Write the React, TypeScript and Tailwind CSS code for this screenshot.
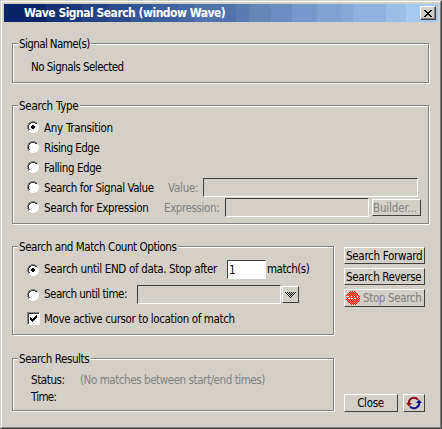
import React from "react";

const raised = "border border-t-white border-l-white border-r-[#404040] border-b-[#404040] bg-[#d4d0c8]";
const sunken = "border border-t-[#404040] border-l-[#404040] border-r-white border-b-white";

function Group({ title, legend, className, children }: { title: string; legend: string; className: string; children: React.ReactNode }) {
  return (
    <section className={`border border-[#808080] shadow-[1px_1px_0_white,inset_1px_1px_0_white] ${className}`}>
      <div className={`ml-[5px] -mt-[8px] h-[16px] bg-[#d4d0c8] pl-[1px] leading-[16px] ${legend}`}>{title}</div>
      {children}
    </section>
  );
}

function Radio({ checked = false }: { checked?: boolean }) {
  return (
    <svg className="mr-[5px] h-[12px] w-[12px] shrink-0" viewBox="0 0 12 12" shapeRendering="crispEdges">
      <path fill="#fff" d="M4 1h4v1h2v2h1v4h-1v2H8v1H4v-1H2V8H1V4h1V2h2z" />
      <path fill="#808080" d="M4 0h4v1H4zM2 1h2v1H2zM8 1h2v1H8zM1 2h1v2H1zM0 4h1v4H0zM1 8h1v2H1z" />
      <path fill="#404040" d="M4 1h4v1H4zM2 2h2v1H2zM8 2h2v1H8zM2 3h1v1H2zM1 4h1v4H1zM2 8h1v1H2z" />
      <path fill="#fff" d="M11 4h1v4h-1zM10 8h1v2h-1zM8 10h2v1H8zM4 11h4v1H4zM2 10h2v1H2z" />
      {checked && <path fill="#000" d="M5 4h2v1h1v2H7v1H5V7H4V5h1z" />}
    </svg>
  );
}

const stopDots: { x: number; y: number }[] = [];
for (let y = 0; y < 14; y++) {
  for (let x = 0; x < 14; x++) {
    if ((x + y) % 2 === 0 && (x - 6.5) ** 2 + (y - 6.5) ** 2 < 50) stopDots.push({ x, y });
  }
}

function StopIcon() {
  return (
    <svg className="ml-[1px] mr-[3px] shrink-0" width="14" height="14" viewBox="0 0 14 14" shapeRendering="crispEdges">
      <circle cx="7" cy="7" r="6.5" fill="#f47860" />
      {stopDots.map(({ x, y }) => <rect key={`${x}-${y}`} x={x} y={y} width="1" height="1" fill="#f01800" />)}
      <path fill="#fff" d="M1 5h2v1H1zM2 7h2v1H2zM5 5h1v1H5zM5 7h2v1H5zM8 5h1v1H8zM8 7h2v1H8zM11 5h1v2h-1z" />
    </svg>
  );
}

export default function App() {
  return (
    <div className="flex h-[429px] w-[442px] flex-col overflow-hidden whitespace-nowrap border border-b-[#404040] border-l-[#d4d0c8] border-r-[#404040] border-t-[#d4d0c8] bg-[#d4d0c8] font-['DejaVu_Sans_Condensed','DejaVu_Sans',sans-serif] text-[11.5px] leading-[16px] text-black">
      <div className="flex flex-1 flex-col border border-b-[#808080] border-l-white border-r-[#808080] border-t-white pl-[10px] pt-[2px]">
        <header className="-ml-[8px] flex h-[18px] w-[434px] items-center bg-[linear-gradient(90deg,#0a246a_42px,#153073_42px_60px,#1b387b_60px_78px,#254283_78px_104px,#2b4b8c_104px_126px,#365795_126px_148px,#3f60a0_148px_174px,#4869a6_174px_190px,#5072ad_190px_232px,#5a7bb2_232px_245px,#6585b7_245px_267px,#6c8dc0_267px_288px,#7698cb_288px_313px,#80a2d2_313px_338px,#86a8d7_338px_349px,#91b1df_349px_382px,#9bbee8_382px_402px,#a5c9f0_402px)] pl-[20px] pr-[2px]">
          <h1 className="flex-1 text-[12px] font-bold tracking-[-0.5px] text-white">Wave Signal Search (window Wave)</h1>
          <button className={`flex h-[14px] w-[16px] items-center justify-center ${raised} shadow-[inset_-1px_-1px_0_#808080]`}>
            <svg width="8" height="7" viewBox="0 0 8 7" shapeRendering="crispEdges"><path d="M0 0h2v1h1v1h2V1h1V0h2v1H7v1H6v1H5v1h1v1h1v1h1v1H6V6H5V5H3v1H2v1H0V6h1V5h1V4h1V3H2V2H1V1H0z" /></svg>
          </button>
        </header>

        <Group title="Signal Name(s)" legend="w-[73px] tracking-[-0.6px]" className="mt-[21px] h-[40px] w-[417px]">
          <p className="ml-[18px] mt-[7px] tracking-[-0.53px]">No Signals Selected</p>
        </Group>

        <Group title="Search Type" legend="w-[62px] tracking-[-0.27px]" className="mt-[22px] h-[119px] w-[417px]">
          <div className="ml-[14px] mt-[3px]">
            <div className="flex h-[20px] items-center"><Radio checked /><span className="mt-[2px] tracking-[-0.29px]">Any Transition</span></div>
            <div className="flex h-[20px] items-center"><Radio /><span className="mt-[2px] tracking-[-0.5px]">Rising Edge</span></div>
            <div className="flex h-[20px] items-center"><Radio /><span className="mt-[2px] tracking-[-0.42px]">Falling Edge</span></div>
            <div className="flex h-[20px] items-center">
              <Radio /><span className="mt-[2px] w-[124px] tracking-[-0.44px]">Search for Signal Value</span>
              <span className="mt-[2px] w-[35px] tracking-[-0.25px] text-[#808080]">Value:</span>
              <div className={`h-[19px] w-[215px] ${sunken}`} />
            </div>
            <div className="flex h-[20px] items-center">
              <Radio /><span className="mt-[2px] w-[120px] tracking-[-0.38px]">Search for Expression</span>
              <span className="mt-[2px] w-[61px] tracking-[-0.4px] text-[#808080]">Expression:</span>
              <div className={`h-[19px] w-[144px] ${sunken}`} />
              <button className={`ml-[3px] flex h-[17px] w-[49px] items-center pt-[2px] tracking-[-0.15px] text-[#808080] ${raised}`}>Builder...</button>
            </div>
          </div>
        </Group>

        <div className="mt-[22px] flex h-[89px]">
          <Group title="Search and Match Count Options" legend="w-[160px] tracking-[-0.43px]" className="h-[89px] w-[322px]">
            <div className="ml-[14px] mt-[2px]">
              <div className="flex h-[25px] items-center">
                <Radio checked /><span className="-mt-[1px] w-[183px] tracking-[-0.33px]">Search until END of data. Stop after</span>
                <div className={`flex h-[19px] w-[39px] items-center bg-white pl-[1px] ${sunken}`}>1</div>
                <span className="-mt-[1px] ml-[1px] tracking-[-0.5px]">match(s)</span>
              </div>
              <div className="flex h-[25px] items-center">
                <Radio /><span className="-mt-[1px] w-[93px] tracking-[-0.5px]">Search until time:</span>
                <div className={`h-[19px] w-[144px] ${sunken}`} />
                <button className={`ml-[1px] flex h-[17px] w-[17px] items-center justify-center ${raised}`}>
                  <svg width="11" height="6" viewBox="0 0 11 6" shapeRendering="crispEdges"><path d="M0 0h1v1H0zM2 0h1v1H2zM4 0h1v1H4zM6 0h1v1H6zM8 0h1v1H8zM10 0h1v1h-1zM1 1h1v1H1zM3 1h1v1H3zM5 1h1v1H5zM7 1h1v1H7zM9 1h1v1H9zM2 2h1v1H2zM4 2h1v1H4zM6 2h1v1H6zM8 2h1v1H8zM3 3h1v1H3zM5 3h1v1H5zM7 3h1v1H7zM4 4h1v1H4zM6 4h1v1H6zM5 5h1v1H5z" /></svg>
                </button>
              </div>
              <div className="flex h-[25px] items-center">
                <div className="-mt-[2px] mr-[4px] h-[13px] w-[13px] border border-b-white border-l-[#808080] border-r-white border-t-[#808080] bg-white shadow-[inset_1px_1px_0_#404040]">
                  <svg width="11" height="11" viewBox="0 0 11 11" shapeRendering="crispEdges"><path d="M2 4h1v1h1v1h1V5h1V4h1V3h1V2h1v3H8v1H7v1H6v1H5v1H4V8H3V7H2z" /></svg>
                </div>
                <span className="-mt-[1px] tracking-[-0.38px]">Move active cursor to location of match</span>
              </div>
            </div>
          </Group>
          <div className="ml-[10px] mt-[1px] flex flex-col gap-[4px]">
            <button className={`flex h-[17px] w-[81px] items-center pl-[1px] tracking-[-0.29px] ${raised}`}>Search Forward</button>
            <button className={`flex h-[17px] w-[81px] items-center pl-[1px] tracking-[-0.36px] ${raised}`}>Search Reverse</button>
            <button className={`flex h-[18px] w-[81px] items-center tracking-[-0.36px] text-[#808080] ${raised}`}>
              <StopIcon />
              <span>Stop Search</span>
            </button>
          </div>
        </div>

        <div className="mt-[23px] flex h-[54px] items-end">
          <Group title="Search Results" legend="w-[73px] tracking-[-0.43px]" className="mb-[1px] h-[53px] w-[322px]">
            <div className="ml-[18px] mt-[5px] grid grid-cols-[49px_auto] leading-[17px]">
              <span className="tracking-[-0.4px]">Status:</span><span className="tracking-[-0.43px] text-[#808080]">(No matches between start/end times)</span>
              <span className="tracking-[-0.7px]">Time:</span>
            </div>
          </Group>
          <button className={`ml-[10px] h-[18px] w-[54px] pr-[1px] tracking-[-0.3px] ${raised}`}>Close</button>
          <button className={`ml-[5px] flex h-[18px] w-[22px] items-center justify-center ${raised}`}>
            <svg width="16" height="14" viewBox="0 0 16 14" fill="none" strokeWidth="2">
              <path stroke="#8b0f1c" d="M2.800 7.500A5.200 5.200 0 0 1 12 3.700" /><path fill="#8b0f1c" d="M0 7h6L3 10.500z" />
              <path stroke="#10108b" d="M13.200 6.500A5.200 5.200 0 0 1 4 10.300" /><path fill="#10108b" d="M10 7h6l-3-3.500z" />
            </svg>
          </button>
        </div>
      </div>
    </div>
  );
}
